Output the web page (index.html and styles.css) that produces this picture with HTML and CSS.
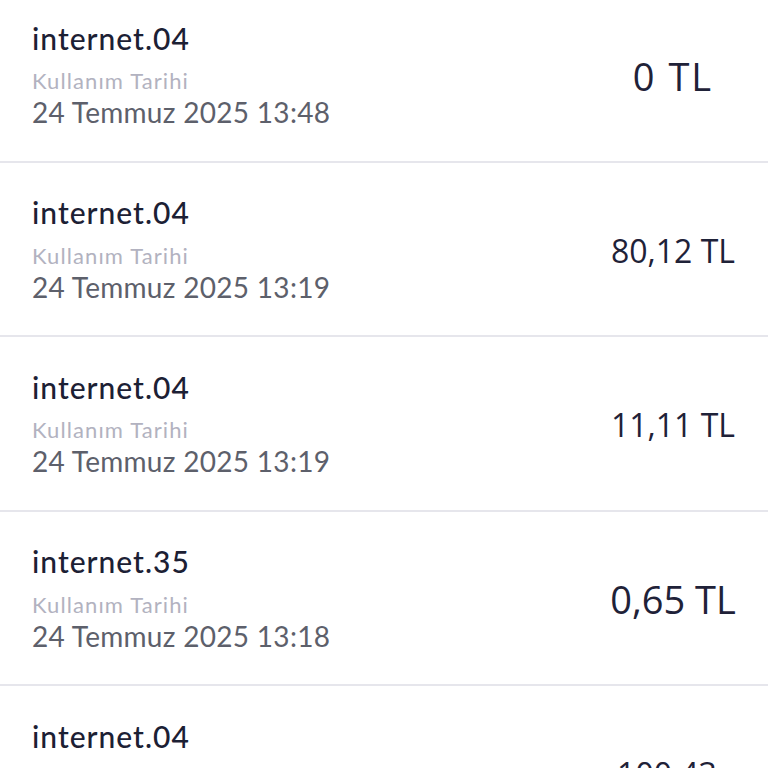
FILE: index.html
```html
<!DOCTYPE html>
<html lang="tr">
<head>
<meta charset="utf-8">
<link rel="stylesheet" href="styles.css">
</head>
<body>
<div class="list">
  <div class="row">
    <div class="info">
      <div class="title">internet.04</div>
      <div class="sub">Kullanım Tarihi</div>
      <div class="date">24 Temmuz 2025 13:48</div>
    </div>
    <div class="amount-col"><span class="amount amount-xl">0 TL</span></div>
  </div>
  <div class="row">
    <div class="info">
      <div class="title">internet.04</div>
      <div class="sub">Kullanım Tarihi</div>
      <div class="date">24 Temmuz 2025 13:19</div>
    </div>
    <div class="amount-col"><span class="amount amount-md">80,12 TL</span></div>
  </div>
  <div class="row">
    <div class="info">
      <div class="title">internet.04</div>
      <div class="sub">Kullanım Tarihi</div>
      <div class="date">24 Temmuz 2025 13:19</div>
    </div>
    <div class="amount-col"><span class="amount amount-md">11,11 TL</span></div>
  </div>
  <div class="row">
    <div class="info">
      <div class="title">internet.35</div>
      <div class="sub">Kullanım Tarihi</div>
      <div class="date">24 Temmuz 2025 13:18</div>
    </div>
    <div class="amount-col"><span class="amount amount-lg">0,65 TL</span></div>
  </div>
  <div class="row">
    <div class="info">
      <div class="title">internet.04</div>
      <div class="sub">Kullanım Tarihi</div>
      <div class="date">24 Temmuz 2025 13:18</div>
    </div>
    <div class="amount-col amount-col-left"><span class="amount amount-md">100,43</span></div>
  </div>
</div>
</body>
</html>
```

FILE: styles.css
```css
html, body {
  margin: 0;
  padding: 0;
  background: #ffffff;
}
body {
  width: 768px;
  height: 768px;
  overflow: hidden;
}
.list {
  display: flex;
  flex-direction: column;
  margin-top: -12px;
}
.row {
  display: flex;
  align-items: stretch;
  height: 174.5px;
  box-sizing: border-box;
  border-bottom: 2px solid #e6e6ec;
  padding: 0 20px 0 32px;
  flex: none;
}
.info {
  flex: 1;
  display: flex;
  flex-direction: column;
  padding-top: 31.9px;
  font-family: Lato, "Liberation Sans", sans-serif;
}
.title {
  font-size: 30px;
  line-height: 36px;
  letter-spacing: 1px;
  font-weight: 500;
  color: #1c2034;
}
.sub {
  margin-top: 12.6px;
  font-size: 22px;
  line-height: 26px;
  letter-spacing: 1.1px;
  color: #b2b2c0;
}
.date {
  margin-top: 1px;
  font-size: 28px;
  line-height: 34px;
  letter-spacing: 0.3px;
  color: #5d606b;
}
.amount-col {
  width: 150px;
  display: flex;
  align-items: center;
  justify-content: center;
  padding-top: 3px;
}
.amount-col-left {
  padding-right: 12px;
  box-sizing: border-box;
}
.amount {
  font-family: "Open Sans", "Noto Sans", sans-serif;
  color: #1f2238;
  white-space: nowrap;
}
.amount-xl { font-size: 38px; letter-spacing: 2px; }
.amount-lg { font-size: 38px; }
.amount-md { font-size: 32px; }
```
